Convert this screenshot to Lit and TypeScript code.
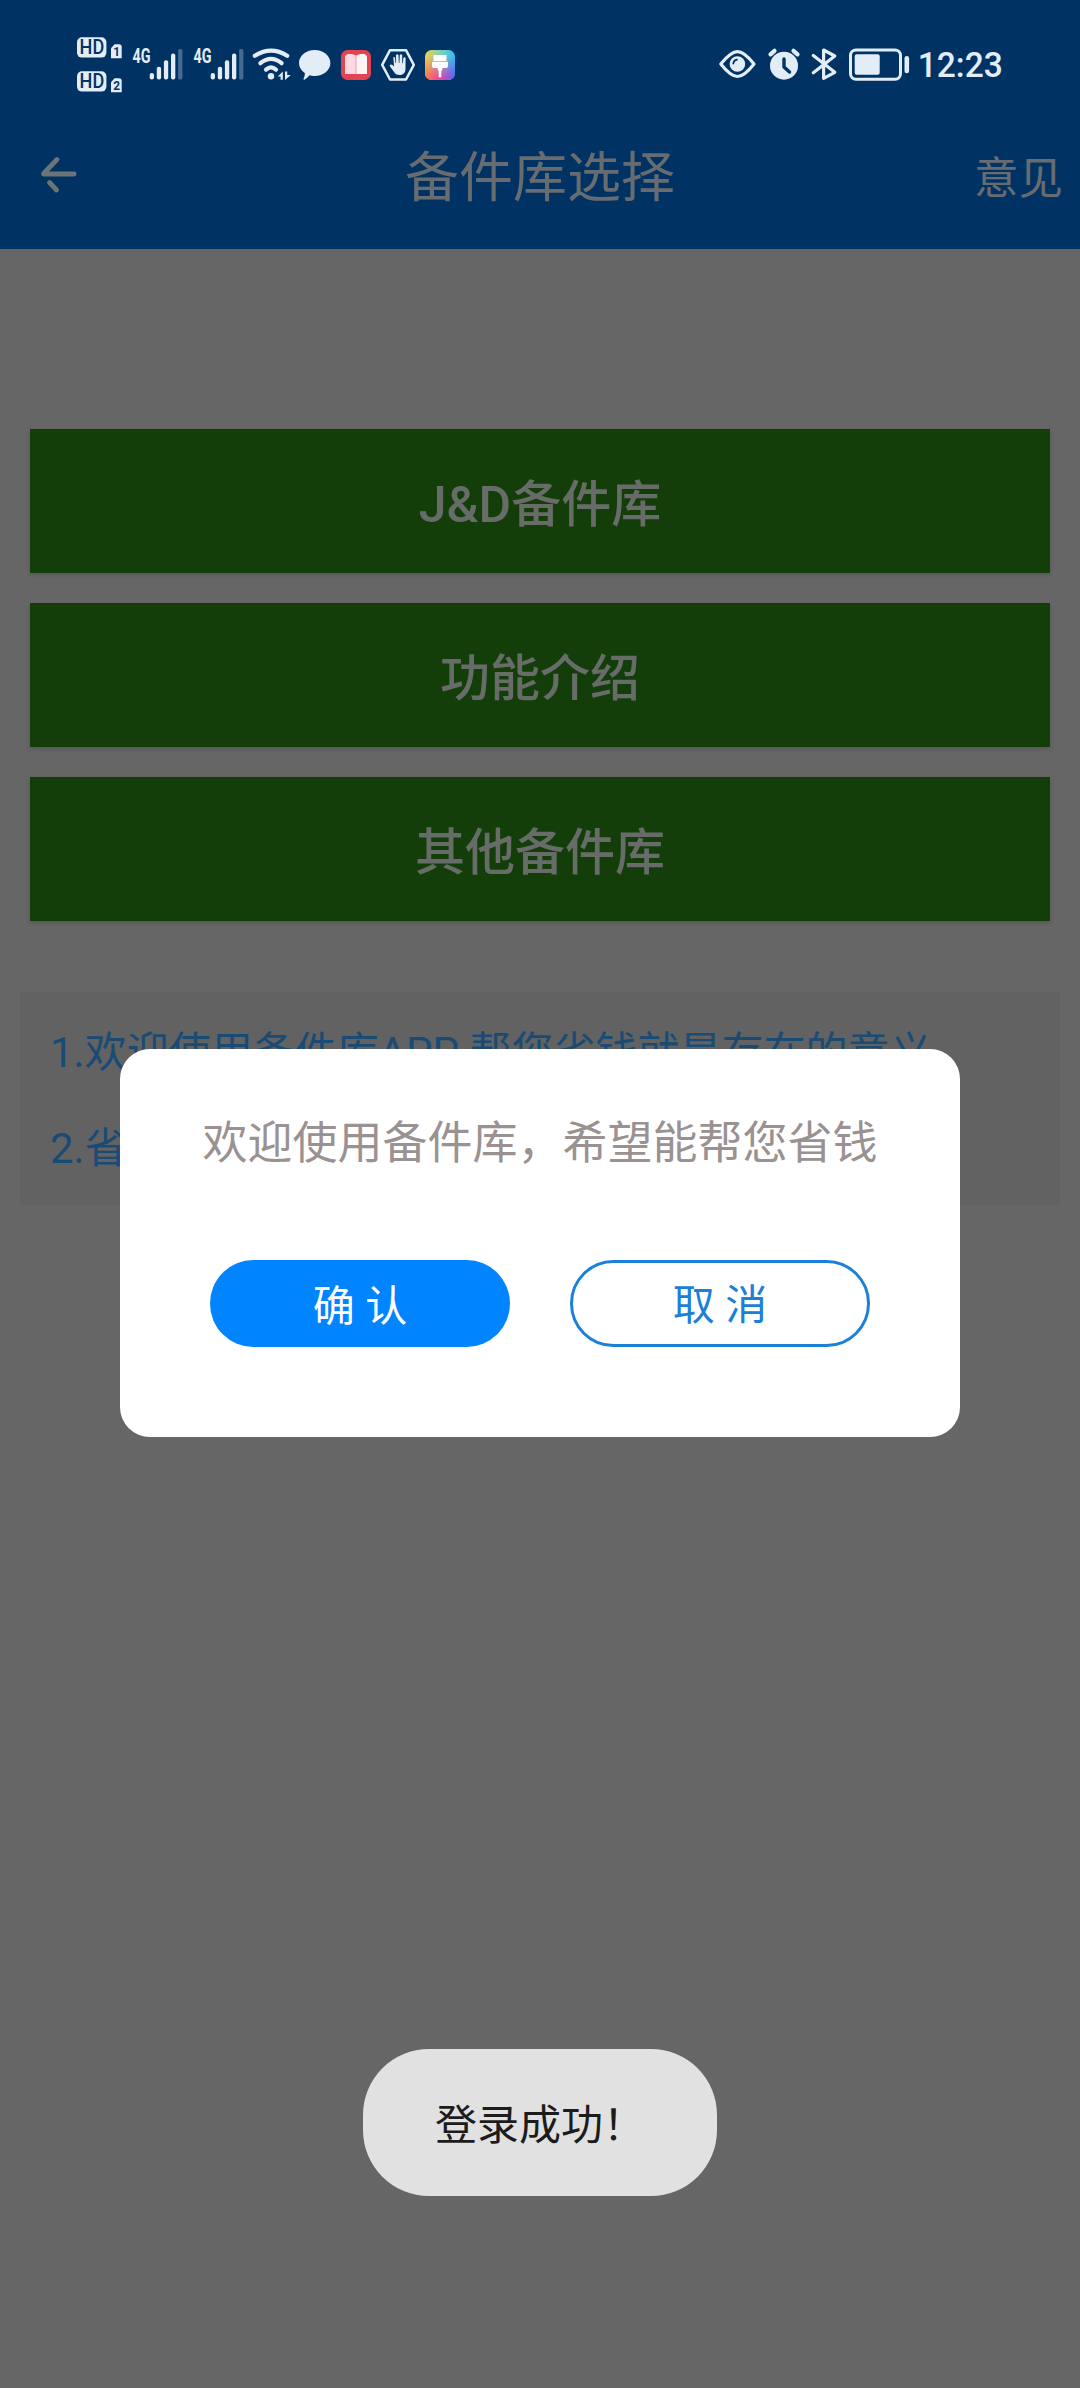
import { LitElement, html, css, svg } from "lit";
import { customElement } from "lit/decorators.js";

const signalBars = (x: number) => svg`
  <rect x=${x} y="73" width="4.3" height="6.5" rx="2.1" />
  <rect x=${x + 7.1} y="66.8" width="4.3" height="12.7" rx="2" />
  <rect x=${x + 14.2} y="60.3" width="4.3" height="19.2" rx="2" />
  <rect x=${x + 21.3} y="53.6" width="4.3" height="25.9" rx="2" />
  <rect x=${x + 28.4} y="49" width="4.3" height="30.5" rx="1.6" fill="#45698f" />
`;

const hdBadge = (y: number, sim: string) => svg`
  <rect x="77" y=${y} width="29.4" height="20.4" rx="5" />
  <text class="cut" x="79.6" y=${y + 17.2} font-size="20" font-weight="500" textLength="24.6" lengthAdjust="spacingAndGlyphs">HD</text>
  <path d="M111 ${y + 21}v-10l3.6-4h4.4q2.7 0 2.7 2.6v11.4z" />
  <text class="cut" x="113.2" y=${y + 18.8} font-size="13.5" font-weight="700" textLength="6.8" lengthAdjust="spacingAndGlyphs">${sim}</text>
`;

@customElement("status-bar")
export class StatusBar extends LitElement {
  static styles = css`
    :host { display: flex; justify-content: space-between; height: 110px; padding: 0 71px 0 60px; }
    .group { display: flex; padding-top: 20px; }
    svg { display: block; height: 90px; fill: #e3edf8; font-family: Roboto, sans-serif; }
    .cut { fill: #003366; }
    .line { fill: none; stroke: #e3edf8; stroke-linecap: round; stroke-linejoin: round; }
  `;
  render() {
    return html`
      <div class="group">
        <svg width="67" viewBox="60 20 67 90">${hdBadge(37.2, "1")}${hdBadge(71.2, "2")}</svg>
        <svg width="61" viewBox="127 20 61 90">
          <text x="132.5" y="62.600" font-size="19.5" font-weight="700" textLength="18" lengthAdjust="spacingAndGlyphs">4G</text>
          ${signalBars(149.7)}
        </svg>
        <svg width="61" viewBox="188 20 61 90">
          <text x="193.5" y="62.600" font-size="19.5" font-weight="700" textLength="18" lengthAdjust="spacingAndGlyphs">4G</text>
          ${signalBars(210.7)}
        </svg>
        <svg width="46" viewBox="249 20 46 90">
          <g class="line" stroke-width="4.2">
            <path d="M254.8 55.8Q271 45.6 287.2 55.8" />
            <path d="M260.4 63.2Q271 54.6 281.6 63.2" />
            <path d="M266 69.6Q271 65.2 276 69.6" />
          </g>
          <circle cx="271" cy="76.3" r="3.2" />
          <path d="M282.8 71.5v8.3h-2.2v-3.4h-2.8zM285 71.5h2.2v3.4h3.6l-5.8 5z" />
        </svg>
        <svg width="42" viewBox="295 20 42 90">
          <path d="M314.7 50c8.7 0 15.7 5.8 15.7 13s-7 13-15.7 13c-2.2 0-3.7-.2-5.2-.7-1.500 1.700-3 3.400-5.200 4.400-.7.3-1-.5-.7-1.100.9-1.900 1.400-3.900 1.200-5.600-3.600-2.400-5.800-6-5.800-10 0-7.200 7-13 15.700-13z" />
        </svg>
        <svg width="41" viewBox="337 20 41 90">
          <rect x="341" y="50" width="30" height="30" rx="6.500" fill="#e2454f" />
          <path d="M345 55.500h1.200l1-1.500c4-.3 7 .2 8.800 1.600v18.400h-11z" fill="#ffd9e1" />
          <path d="M367 55.500h-1.200l-1-1.500c-4-.3-7 .2-8.800 1.600v18.400h11z" fill="#fff4f6" />
          <path d="M356 55.500v18.500" stroke="#ee8d98" stroke-width=".8" />
        </svg>
        <svg width="43" viewBox="378 20 43 90">
          <path class="line" stroke-width="2.500" d="M390 50.200h16l7.800 14.600-7.800 14.700h-16l-7.800-14.700z" />
          <path d="M393.300 57.200q1.400-.8 1.700.6l.5 5.200h.6l-.1-8q1.400-1.700 2.500 0l.3 8h.6l.4-8q1.300-1.500 2.400 0v8.300h.6l.6-5.600q1.200-1.200 2.200.2l-.1 11.100c-.1 3.600-1.900 6-5.800 6-3.200 0-4.600-1.400-6-3.600l-4-5.400q.6-2.200 2.700-.9l1.700 1.500z" />
        </svg>
        <svg width="40" viewBox="421 20 40 90">
          <defs>
            <linearGradient id="top" x1="0" y1="0" x2="1" y2="0"><stop offset="0" stop-color="#f7cf47" /><stop offset=".5" stop-color="#7fd3b4" /><stop offset="1" stop-color="#31bdf5" /></linearGradient>
            <linearGradient id="low" x1="0" y1="0" x2="1" y2="0"><stop offset="0" stop-color="#fb7a45" /><stop offset=".45" stop-color="#f2489c" /><stop offset="1" stop-color="#5f5cf7" /></linearGradient>
            <linearGradient id="fade" x1="0" y1="0" x2="0" y2="1"><stop offset=".2" stop-color="#000" /><stop offset=".9" stop-color="#fff" /></linearGradient>
            <mask id="half"><rect x="425" y="50" width="30" height="30" fill="url(#fade)" /></mask>
          </defs>
          <rect x="425" y="50" width="30" height="30" rx="6.500" fill="url(#top)" />
          <rect x="425" y="50" width="30" height="30" rx="6.500" fill="url(#low)" mask="url(#half)" />
          <path d="M433.500 55h13v6h-13z" fill="#fff" />
          <path d="M432 61.800h16v4.500q0 1.700-1.700 1.700h-4v2l-1 1v6.200h-2.600v-6.200l-1-1v-2h-4q-1.700 0-1.700-1.700z" fill="#fff" />
        </svg>
      </div>
      <div class="group">
        <svg width="47" viewBox="714 20 47 90">
          <path class="line" stroke-width="3.200" d="M720.800 64C728 55 732.500 51.600 737.400 51.600S747 55 754 64C747 73 742.300 76.500 737.400 76.500S728 73 720.800 64z" />
          <circle cx="737.400" cy="64" r="7.800" />
          <path d="M733.300 63.500q.4-3.200 3.600-3.900" fill="none" stroke="#003366" stroke-width="1.800" stroke-linecap="round" />
        </svg>
        <svg width="45" viewBox="761 20 45 90">
          <circle cx="784" cy="65.700" r="14" />
          <path class="line" stroke-width="4.200" d="M770.500 54.300l4-3.500M797.500 54.300l-4-3.500" />
          <path d="M784 59v8l5.500 5" fill="none" stroke="#003366" stroke-width="3.400" stroke-linecap="round" stroke-linejoin="round" />
        </svg>
        <svg width="37" viewBox="806 20 37 90">
          <path class="line" stroke-width="3.200" d="M813.300 55.500L834.800 72.300 823.600 78.300V50L834.800 56 813.300 72.800" />
        </svg>
        <svg width="71" viewBox="843 20 71 90">
          <rect class="line" stroke-width="3" x="850.500" y="50" width="50" height="29.200" rx="5.500" />
          <rect x="854.700" y="54.300" width="25" height="20.400" rx="2" />
          <rect x="904.500" y="56" width="4.600" height="17.300" rx="2.300" />
        </svg>
        <svg width="95" viewBox="914 20 95 90">
          <text x="917.800" y="77.200" font-size="35" font-weight="500" textLength="85" lengthAdjust="spacingAndGlyphs">12:23</text>
        </svg>
      </div>
    `;
  }
}

@customElement("app-root")
export class AppRoot extends LitElement {
  static styles = css`
    :host {
      display: block; position: relative; width: 1080px; height: 2388px; overflow: hidden;
      background: #666; font-family: Roboto, "Noto Sans CJK SC", sans-serif;
    }
    * { box-sizing: border-box; }
    .header { height: 249px; background: #003364; }
    .nav { display: grid; grid-template-columns: 1fr auto 1fr; align-items: center; height: 134px; color: #676c71; }
    .back { display: block; width: 60px; height: 60px; margin-left: 30px; }
    .title { font-size: 54px; line-height: 80px; padding-top: 3px; }
    .action { justify-self: end; padding: 3px 17px 0 0; font-size: 44.5px; line-height: 66px; }
    .actions { display: flex; flex-direction: column; gap: 30px; padding: 180px 30px 0; }
    .entry {
      display: flex; align-items: center; justify-content: center; height: 144px;
      background: #133e09; color: #676c69; font-size: 50px; font-weight: 500; line-height: 74px; padding-top: 7px;
      box-shadow: 0 2px 4px rgba(0, 0, 0, .16);
    }
    .notice { margin: 71px 20px 0; height: 213px; padding: 13px 30px 0; background: #626262; color: #194b74; font-size: 42px; line-height: 96px; }
    .line { white-space: nowrap; }
    .dialog {
      position: absolute; left: 120px; top: 1049px; width: 840px; height: 388px; border-radius: 30px;
      background: #fff; padding-top: 62px; display: flex; flex-direction: column; align-items: center;
    }
    .message { font-size: 45px; line-height: 66px; color: #9a9191; white-space: nowrap; }
    .choices { display: flex; gap: 60px; margin-top: 83px; }
    .choice {
      display: flex; align-items: center; justify-content: center; width: 300px; height: 87px;
      border-radius: 43.5px; font-size: 42px; padding-top: 7px; line-height: 60px; white-space: pre;
    }
    .confirm { background: #0084ff; color: #fff; }
    .cancel { border: 3px solid #1c80d8; color: #1c80d8; padding-top: 5px; }
    .toast {
      position: absolute; left: 363px; top: 2049px; width: 354px; height: 147px; border-radius: 66px;
      background: #e1e1e1; color: #1c1c1c; display: flex; align-items: center; justify-content: center;
      font-size: 42px; line-height: 60px; white-space: nowrap; padding-top: 6px;
    }
  `;
  render() {
    return html`
      <div class="header">
        <status-bar></status-bar>
        <div class="nav">
          <svg class="back" viewBox="30 147 60 60" fill="none" stroke="#6d7478" stroke-width="4.800" stroke-linecap="round">
            <path d="M43.600 174H74.200M43.600 173.500L57 159.500M49.500 182.500L56.500 190" />
          </svg>
          <div class="title">备件库选择</div>
          <div class="action">意见</div>
        </div>
      </div>
      <div class="actions">
        ${["J&D备件库", "功能介绍", "其他备件库"].map((label) => html`<div class="entry">${label}</div>`)}
      </div>
      <div class="notice">
        <div class="line">1.欢迎使用备件库APP 帮您省钱就是存在的意义</div>
        <div class="line">2.省钱</div>
      </div>
      <div class="dialog">
        <div class="message">欢迎使用备件库，希望能帮您省钱</div>
        <div class="choices">
          <div class="choice confirm">确 认</div>
          <div class="choice cancel">取 消</div>
        </div>
      </div>
      <div class="toast">登录成功！</div>
    `;
  }
}
